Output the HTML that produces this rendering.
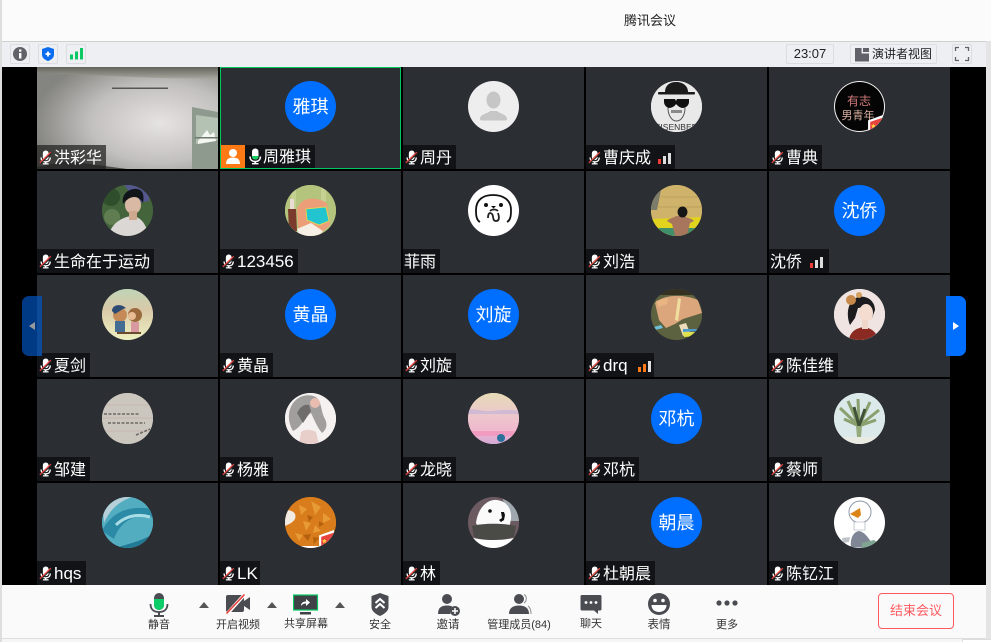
<!DOCTYPE html>
<html lang="zh">
<head>
<meta charset="utf-8">
<title>腾讯会议</title>
<style>
html,body{margin:0;padding:0;width:991px;height:642px;overflow:hidden;background:#fff;font-family:"Liberation Sans","Noto Sans CJK SC",sans-serif}
div,span,svg{box-sizing:border-box}
.abs,.c,.l,.av,.t,.box,.tri{position:absolute}
.c{width:181px;height:102px;background:#2b2e33}
.l{left:0;top:78px;height:24px;background:#111316;color:#fff;font-size:16px;line-height:27px;padding-left:17px;white-space:nowrap;overflow:hidden}
.lat{font-size:17px;line-height:26px;padding-left:17px}
.l svg.m{position:absolute;left:2px;top:5px;width:13px;height:15px}
.l svg.sig{position:absolute;top:8px;width:14px;height:11px}
.av{left:65px;top:14px;width:51px;height:51px;border-radius:50%;overflow:hidden;text-align:center;color:#fff;font-size:18px;line-height:53px}
.av svg{display:block;width:51px;height:51px}
.blue{background:#006fff}
.t{font-size:11px;line-height:14px;color:#333;text-align:center;width:80px;white-space:nowrap}
.box{top:44px;height:20px;border:1px solid #dcdde1;background:#eeeff3;border-radius:2px}
.tri{width:0;height:0;border-left:5px solid transparent;border-right:5px solid transparent;border-bottom:6px solid #555;top:602px}
</style>
</head>
<body>
<svg width="0" height="0" style="position:absolute">
<defs>
<symbol id="m" viewBox="0 0 14 17">
<rect x="4" y="0.5" width="6.500" height="11" rx="3.200" fill="#fff"/>
<path d="M2 8.500c0 3.400 2.200 5 5.200 5s5.200-1.600 5.200-5" fill="none" stroke="#fff" stroke-width="1.500"/>
<rect x="6.400" y="13" width="1.600" height="2.500" fill="#fff"/>
<rect x="4" y="15" width="6.500" height="1.400" fill="#fff"/>
<path d="M0.800 14.500L13.200 2.500" stroke="#222" stroke-width="1.200" transform="translate(.8 .8)"/>
<path d="M0.500 14.500L13 2.500" stroke="#e8413c" stroke-width="1.300"/>
</symbol>
<symbol id="sr" viewBox="0 0 14 11"><rect x="1" y="6" width="3" height="5" fill="#f23c36"/><rect x="6" y="3" width="3" height="8" fill="#ddd"/><rect x="11" y="0" width="3" height="11" fill="#ddd"/></symbol>
<symbol id="so" viewBox="0 0 14 11"><rect x="1" y="6" width="3" height="5" fill="#ff7a14"/><rect x="6" y="3" width="3" height="8" fill="#ff7a14"/><rect x="11" y="0" width="3" height="11" fill="#ddd"/></symbol>
<symbol id="flag" viewBox="0 0 16 16"><path d="M1 5L15 0V16H1Z" fill="#fff"/><path d="M3 6.500L15 2.500V16H3Z" fill="#e8423f"/><path d="M6 8l.7 1.500 1.600.2-1.200 1 .4 1.600-1.500-.8-1.400.8.300-1.600-1.100-1 1.600-.2z" fill="#ffd23c"/></symbol>
</defs>
</svg>

<!-- chrome -->
<div class="abs" style="left:0;top:0;width:991px;height:42px;background:#fbfbfb"></div>
<div class="abs" style="left:0;top:0;width:2px;height:642px;background:#dedede"></div>
<div class="abs" style="left:624px;top:12px;font-size:13px;line-height:18px;color:#222;white-space:nowrap">腾讯会议</div>
<div class="abs" style="left:2px;top:41px;width:984px;height:26px;background:#eeeff3;border-top:1px solid #cfcfcf"></div>
<div class="abs" style="left:986px;top:41px;width:5px;height:598px;background:#e4e4e4"></div>
<div class="abs" style="left:2px;top:67px;width:984px;height:518px;background:#000"></div>

<div class="box" style="left:10px;width:20px"><svg width="18" height="18" style="display:block"><circle cx="9" cy="9" r="7" fill="#5f6268"/><rect x="8" y="8" width="2.400" height="5.500" fill="#fff"/><rect x="8" y="4.500" width="2.400" height="2.200" fill="#fff"/></svg></div>
<div class="box" style="left:38px;width:20px"><svg width="18" height="18" style="display:block"><path d="M9 2l6 2v5.500c0 3.500-3 5.500-6 6.500-3-1-6-3-6-6.500V4z" fill="#0a6cf0"/><path d="M9 6.500v5M6.500 9h5" stroke="#fff" stroke-width="1.800"/></svg></div>
<div class="box" style="left:66px;width:20px"><svg width="18" height="18" style="display:block"><rect x="3" y="9.500" width="3" height="5" fill="#0cc864"/><rect x="8" y="6.500" width="3" height="8" fill="#0cc864"/><rect x="13" y="3" width="3" height="11.500" fill="#0cc864"/></svg></div>

<div class="box" style="left:786px;width:48px;height:20px;font-size:13px;line-height:18px;text-align:center;color:#222">23:07</div>
<div class="box" style="left:850px;width:87px;height:20px;font-size:12px;line-height:19px;color:#222;padding-left:21px;white-space:nowrap"><svg width="15" height="15" style="position:absolute;left:4px;top:2px"><path d="M0 1h6.500v5.500H14V14.500H0z" fill="#5f6268"/><rect x="8" y="1" width="6" height="4" fill="#5f6268"/></svg>演讲者视图</div>
<div class="box" style="left:952px;width:20px;height:20px"><svg width="18" height="18" style="display:block"><path d="M2.500 6V2.500H6M12 2.500h3.500V6M15.500 12v3.500H12M6 15.500H2.500V12" fill="none" stroke="#5f6268" stroke-width="1.300"/></svg></div>

<!-- ROW 1 -->
<div class="c" style="left:37px;top:67px;background:#a9a9a6;overflow:hidden">
<svg width="181" height="102" style="position:absolute;left:0;top:0">
<defs><radialGradient id="wall" cx="68%" cy="55%" r="70%"><stop offset="0" stop-color="#e6e3e3"/><stop offset=".55" stop-color="#c2c0be"/><stop offset="1" stop-color="#848480"/></radialGradient>
<linearGradient id="ceil" x1="0" y1="0" x2="0" y2="1"><stop offset="0" stop-color="#63635b"/><stop offset="1" stop-color="#a8a8a0"/></linearGradient></defs>
<rect width="181" height="102" fill="url(#wall)"/>
<path d="M0 0H181V12L120 11 0 6z" fill="url(#ceil)"/>
<rect x="75" y="20.500" width="56" height="1.500" fill="#55564f"/>
<path d="M155 40l26 5v57h-26z" fill="#8d9a8d"/>
<path d="M159 48l22 3v22l-22 4z" fill="#b4c2b4"/>
<path d="M161 74l9-11 3 5 4-3 2 9-18 3z" fill="#f3f6f1"/>
<rect x="158" y="70" width="23" height="1.500" fill="#6d7a6c"/>
<path d="M0 100l30-6 60 8H0z" fill="#4a4a48"/>
</svg>
<div class="l" style="width:69px;background:rgba(32,32,32,.72)"><svg class="m"><use href="#m"/></svg>洪彩华</div>
</div>

<div class="c" style="left:220px;top:67px;border:1px solid #00c85a">
<div class="av blue" style="left:64px;top:13px">雅琪</div>
<div class="l" style="left:0;top:77px;width:94px;height:23px;padding-left:42px;line-height:26px">
<div class="abs" style="left:0;top:0;width:24px;height:23px;background:#ff7a14"><svg width="24" height="23"><circle cx="12" cy="8" r="4" fill="#fff"/><path d="M5 19c0-5 3-6.500 7-6.500s7 1.500 7 6.500z" fill="#fff"/></svg></div>
<svg width="14" height="17" style="position:absolute;left:27px;top:3px"><rect x="4" y=".5" width="6.500" height="11" rx="3.200" fill="#fff"/><path d="M4 8h6.500v.500a3.200 3 0 0 1-6.500 0z" fill="#17d060"/><path d="M2 8.500c0 3.400 2.200 5 5.200 5s5.200-1.600 5.200-5" fill="none" stroke="#fff" stroke-width="1.500"/><rect x="6.400" y="13" width="1.600" height="2.500" fill="#fff"/><rect x="4" y="15" width="6.500" height="1.400" fill="#fff"/></svg>周雅琪</div>
</div>

<div class="c" style="left:403px;top:67px"><div class="av" style="background:#eee"><svg viewBox="0 0 51 51"><ellipse cx="25.500" cy="19" rx="7" ry="8.500" fill="#c6c6c6"/><path d="M12 38c0-5 8-5.500 10-8h7c2 2.500 10 3 10 8 0 1-.6 1.500-2 1.500H14c-1.400 0-2-.5-2-1.500z" fill="#c6c6c6"/></svg></div>
<div class="l" style="width:53px"><svg class="m"><use href="#m"/></svg>周丹</div></div>

<div class="c" style="left:586px;top:67px"><div class="av" style="background:#e9e9e9"><svg viewBox="0 0 51 51"><rect width="51" height="51" fill="#e9e9e9"/><path d="M14 11C14 5 18 1 25 1s12 4 12 10z" fill="#1b1b1b"/><rect x="7" y="11" width="37" height="2.500" rx="1" fill="#1b1b1b"/><path d="M13 18h11l1 2 1-2h12v3c0 3-3 6-6 6-3 0-5-2-7-4-1 2-4 4-7 4-2 0-5-3-5-6z" fill="#111"/><path d="M17 27c0 6 3 13 8.500 13S34 33 34 27" fill="none" stroke="#555" stroke-width="1"/><rect x="20" y="29" width="11" height="3" fill="#8a8a8a"/><text x="25.500" y="49" text-anchor="middle" font-size="8.500" fill="#333" font-family="Liberation Sans">HEISENBERG</text></svg></div>
<div class="l" style="width:89px"><svg class="m"><use href="#m"/></svg>曹庆成<svg class="sig" style="left:71px"><use href="#sr"/></svg></div></div>

<div class="c" style="left:769px;top:67px"><div class="av" style="background:#f2f2f2"><svg viewBox="0 0 51 51"><circle cx="25.500" cy="25.500" r="24.500" fill="#050505"/><text x="25" y="24" text-anchor="middle" font-size="12" fill="#d07a7a" font-family="Noto Sans CJK SC">有志</text><text x="24" y="38" text-anchor="middle" font-size="11" fill="#d9b0a0" font-family="Noto Sans CJK SC">男青年</text><use href="#flag" x="33" y="34" width="17" height="17"/></svg></div>
<div class="l" style="width:53px"><svg class="m"><use href="#m"/></svg>曹典</div></div>

<!-- ROW 2 -->
<div class="c" style="left:37px;top:171px"><div class="av" style="background:#3f5f38"><svg viewBox="0 0 51 51"><rect width="51" height="51" fill="#44643b"/><path d="M22 0h25v16l-10 2z" fill="#54588e"/><circle cx="9" cy="12" r="9" fill="#2f4f2c"/><circle cx="10" cy="32" r="8" fill="#5f7d50"/><path d="M7 51c1-11 12-19 23-20 10 1 14 9 17 20z" fill="#dad7d4"/><ellipse cx="31" cy="20" rx="8" ry="9" fill="#d9b9a4"/><rect x="27" y="26" width="8" height="9" fill="#cfa98e"/><path d="M21 19c-2-11 7-16 14-15 7 1 7 8 6 14-2-3-4-6-9-6-4 0-8 3-11 7z" fill="#11151a"/></svg></div>
<div class="l" style="width:117px"><svg class="m"><use href="#m"/></svg>生命在于运动</div></div>

<div class="c" style="left:220px;top:171px"><div class="av" style="background:#b3c37c"><svg viewBox="0 0 51 51"><rect width="51" height="51" fill="#b4c47d"/><path d="M6 0h5v51H6zM36 0h5v24h-5z" fill="#c4d192"/><path d="M12 24C16 12 30 11 42 18l3 22-12 11H14z" fill="#ec9e78"/><path d="M12 44l14-6 12 8-4 5H14z" fill="#f5efe6"/><path d="M21 24l20-2 3 14-10 4-12-5z" fill="#22c4d0" stroke="#e4e04a" stroke-width=".8"/><path d="M3 24h8l1 22H4z" fill="#7a3a2c"/><rect x="5" y="14" width="4" height="10" fill="#e8dcd4"/></svg></div>
<div class="l lat" style="width:78px"><svg class="m"><use href="#m"/></svg>123456</div></div>

<div class="c" style="left:403px;top:171px"><div class="av" style="background:#fff"><svg viewBox="0 0 51 51"><path d="M12 37c-4-2-4-8-4-12C8 14 16 10 25 10s18 4 18 15c0 4 0 10-4 12" fill="none" stroke="#111" stroke-width="1.800"/><circle cx="18" cy="20" r="2" fill="#111"/><circle cx="33" cy="20" r="2" fill="#111"/><path d="M22 26c2-2 6-2 8 0M20 33c0-5 2-6 4-4s0 7 4 7 3-5 2-8" fill="none" stroke="#222" stroke-width="1.800"/><path d="M23 21h5l-2.500 2.500z" fill="#111"/></svg></div>
<div class="l" style="width:37px;padding-left:1px">菲雨</div></div>

<div class="c" style="left:586px;top:171px"><div class="av" style="background:#cdb169"><svg viewBox="0 0 51 51"><rect width="51" height="51" fill="#cfb36b"/><path d="M0 0h11L6 25H0z" fill="#7c7c6a"/><path d="M10 12h41M6 22h45" stroke="#b39a55" stroke-width=".8"/><path d="M0 34l51-2v19H0z" fill="#e2d41e"/><path d="M8 43h36v8H8z" fill="#3f8f6a"/><path d="M16 36c2-3 7-3 9-5h8c2 2 8 2 10 5l-4 2-2 9-3 4H24l-3-12z" fill="#a8765c"/><ellipse cx="31.500" cy="27" rx="5" ry="5.500" fill="#161616"/></svg></div>
<div class="l" style="width:53px"><svg class="m"><use href="#m"/></svg>刘浩</div></div>

<div class="c" style="left:769px;top:171px"><div class="av blue">沈侨</div>
<div class="l" style="width:60px;padding-left:1px">沈侨<svg class="sig" style="left:40px"><use href="#sr"/></svg></div></div>

<!-- ROW 3 -->
<div class="c" style="left:37px;top:275px"><div class="av" style="background:#dcdcb8"><svg viewBox="0 0 51 51"><defs><linearGradient id="sea" x1="0" y1="0" x2="0" y2="1"><stop offset="0" stop-color="#bfd4b8"/><stop offset=".4" stop-color="#d9c9a8"/><stop offset="1" stop-color="#edf0c0"/></linearGradient></defs><rect width="51" height="51" fill="url(#sea)"/><circle cx="18" cy="26" r="7" fill="#c68a58"/><path d="M10 22c0-6 8-8 14-3l-3 1-8 5z" fill="#2b4b72"/><rect x="13" y="32" width="10" height="11" fill="#456d93"/><circle cx="33" cy="26" r="7" fill="#9a6a3d"/><circle cx="30" cy="27" r="4" fill="#e8bc94"/><rect x="29" y="33" width="8" height="11" fill="#d89aa0"/><rect x="15" y="43" width="24" height="2" fill="#6b4b30"/></svg></div>
<div class="l" style="width:53px"><svg class="m"><use href="#m"/></svg>夏剑</div></div>

<div class="c" style="left:220px;top:275px"><div class="av blue">黄晶</div>
<div class="l" style="width:53px"><svg class="m"><use href="#m"/></svg>黄晶</div></div>

<div class="c" style="left:403px;top:275px"><div class="av blue">刘旋</div>
<div class="l" style="width:53px"><svg class="m"><use href="#m"/></svg>刘旋</div></div>

<div class="c" style="left:586px;top:275px"><div class="av" style="background:#5a5f3a"><svg viewBox="0 0 51 51"><rect width="51" height="51" fill="#5c6140"/><rect width="51" height="6" fill="#35301f"/><path d="M4 14c8-9 30-9 43-3l4 13-19 6-8 5-9 4-7-8z" fill="#dba67c"/><path d="M5 12l3 6 8-3 1-6z" fill="#e8b583"/><path d="M27 9l3 1-3 22-3-1z" fill="#f3e8a6" opacity=".85"/><path d="M28 36l7-2 4 10-7 3z" fill="#eadcb8"/><path d="M32 40h14l1 2-15 1z" fill="#4d9ad0"/><path d="M32 43h15l-1 4-13 1z" fill="#e0e04c"/><path d="M3 38l7-2 2 3-8 2z" fill="#6ec0d8"/></svg></div>
<div class="l lat" style="width:68px"><svg class="m"><use href="#m"/></svg>drq<svg class="sig" style="left:51px"><use href="#so"/></svg></div></div>

<div class="c" style="left:769px;top:275px"><div class="av" style="background:#efe3e0"><svg viewBox="0 0 51 51"><rect width="51" height="51" fill="#efe4e1"/><path d="M16 36c-4-10-3-24 8-28 9-2 17 4 17 13l-3 8-4-11-10 1-3 10z" fill="#1c1b1d"/><ellipse cx="32" cy="24" rx="7" ry="9" fill="#f4dcd0"/><circle cx="17" cy="11" r="5" fill="#c88a4a"/><circle cx="25" cy="6" r="3" fill="#d2a05a"/><path d="M15 51c1-9 8-12 15-13 7 1 13 5 14 13z" fill="#8b2a22"/><rect x="28" y="31" width="6" height="9" fill="#f0d6c8"/></svg></div>
<div class="l" style="width:69px"><svg class="m"><use href="#m"/></svg>陈佳维</div></div>

<!-- ROW 4 -->
<div class="c" style="left:37px;top:379px"><div class="av" style="background:#cac6be"><svg viewBox="0 0 51 51"><rect width="51" height="51" fill="#cbc7bf"/><path d="M0 12h51M0 25h51M0 38h51" stroke="#c9a8a0" stroke-width=".6"/><path d="M2 21h36M6 30h37M34 42l14-6" stroke="#6b6860" stroke-width="1.600" stroke-dasharray="3 1.500"/></svg></div>
<div class="l" style="width:53px"><svg class="m"><use href="#m"/></svg>邹建</div></div>

<div class="c" style="left:220px;top:379px"><div class="av" style="background:#f4f0f0"><svg viewBox="0 0 51 51"><rect width="51" height="51" fill="#f5f1f1"/><path d="M8 38c-6-10-6-24 4-32 8-6 18-4 21 0 4 6 3 13 7 20 3 6 1 11-3 14-5-6-8-14-11-20-4 2-6 6-9 10-2 3-5 6-9 8z" fill="#a19e9e"/><path d="M12 20c3-6 7-9 12-8l2 6-8 12z" fill="#6f6c6c"/><path d="M16 39c4-3 10-3 15 0l3 12H14z" fill="#e9cfca"/><circle cx="30" cy="10" r="5" fill="#e8bdb0"/></svg></div>
<div class="l" style="width:53px"><svg class="m"><use href="#m"/></svg>杨雅</div></div>

<div class="c" style="left:403px;top:379px"><div class="av" style="background:#edcdcf"><svg viewBox="0 0 51 51"><defs><linearGradient id="sky" x1="0" y1="0" x2="0" y2="1"><stop offset="0" stop-color="#e5dbb4"/><stop offset=".4" stop-color="#ecc9cc"/><stop offset=".75" stop-color="#f0b8ce"/><stop offset="1" stop-color="#d4a8d8"/></linearGradient></defs><rect width="51" height="51" fill="url(#sky)"/><path d="M0 16c10 0 16 3 24 2s16-2 27 0v3H0z" fill="#c9b5d6" opacity=".8"/><rect y="38" width="51" height="5" fill="#f490bb" opacity=".7"/><circle cx="33" cy="45" r="4" fill="#2b6f9a"/></svg></div>
<div class="l" style="width:53px"><svg class="m"><use href="#m"/></svg>龙晓</div></div>

<div class="c" style="left:586px;top:379px"><div class="av blue">邓杭</div>
<div class="l" style="width:53px"><svg class="m"><use href="#m"/></svg>邓杭</div></div>

<div class="c" style="left:769px;top:379px"><div class="av" style="background:#dbe9ea"><svg viewBox="0 0 51 51"><rect width="51" height="51" fill="#dbe9ea"/><rect y="44" width="51" height="7" fill="#e9eae2"/><path d="M25 33L6 15M25 33L14 8M25 33L24 6M25 33L36 9M25 33L45 17M25 33L10 26M25 33L42 27" stroke="#8aa06e" stroke-width="3"/><path d="M25 33L20 14M25 33L31 16" stroke="#3f5238" stroke-width="3"/><path d="M22 33h6l-1 11h-4z" fill="#96ab7c"/></svg></div>
<div class="l" style="width:53px"><svg class="m"><use href="#m"/></svg>蔡师</div></div>

<!-- ROW 5 -->
<div class="c" style="left:37px;top:483px"><div class="av" style="background:#4ba5bb"><svg viewBox="0 0 51 51"><rect width="51" height="51" fill="#53adc0"/><path d="M0 0h30C18 4 8 12 2 26z" fill="#b6cfd8"/><path d="M0 34C10 14 28 8 51 12v8C34 16 18 24 12 42z" fill="#2b8aa5"/><path d="M14 28c8-8 20-12 34-8" fill="none" stroke="#a8dde6" stroke-width="3"/><path d="M14 51c10-4 24-6 37-14v14z" fill="#237a96"/></svg></div>
<div class="l lat" style="width:49px"><svg class="m"><use href="#m"/></svg>hqs</div></div>

<div class="c" style="left:220px;top:483px"><div class="av" style="background:#d6791a"><svg viewBox="0 0 51 51"><rect width="51" height="51" fill="#d87c1c"/><path d="M0 12c4 2 8 1 10 5 2 6-3 9-10 12z" fill="#f2ebe3"/><path d="M14 8l8 4-6 6zM26 4l10 6-6 8zM38 16l8 6-8 4zM18 24l8 2-5 8zM30 28l6 6-8 2zM10 36l8 2-4 6z" fill="#e89a34"/><path d="M22 18l6 2-4 5zM34 24l5 3-5 3zM18 38l8-1-3 7zM28 40l6 1-5 6z" fill="#b4600e"/><rect y="49" width="51" height="2" fill="#fff"/><use href="#flag" x="33" y="33" width="17" height="17"/></svg></div>
<div class="l lat" style="width:40px"><svg class="m"><use href="#m"/></svg>LK</div></div>

<div class="c" style="left:403px;top:483px"><div class="av" style="background:#6e5b62"><svg viewBox="0 0 51 51"><rect width="51" height="51" fill="#6b5a60"/><path d="M34 0h17v24H42z" fill="#9fa8ae"/><path d="M8 26C10 10 20 2 29 3c9 1 15 8 14 19l-2 10-30 0z" fill="#fafafa"/><path d="M4 29c10-3 32-3 44 0l-2 11-13 3H14L6 40z" fill="#4a4a46"/><path d="M3 40c10 4 35 4 46 0l-3 11H8z" fill="#fff"/><circle cx="22" cy="14" r="1.800" fill="#111"/><path d="M33 15h3l1 3-1 5-3 2-2-2 3-2z" fill="#111"/></svg></div>
<div class="l" style="width:37px"><svg class="m"><use href="#m"/></svg>林</div></div>

<div class="c" style="left:586px;top:483px"><div class="av blue">朝晨</div>
<div class="l" style="width:69px"><svg class="m"><use href="#m"/></svg>杜朝晨</div></div>

<div class="c" style="left:769px;top:483px"><div class="av" style="background:#fff"><svg viewBox="0 0 51 51"><ellipse cx="26" cy="15" rx="11" ry="11" fill="#fff" stroke="#8f98a8"/><path d="M16 17l10-6 1 7-3 3z" fill="#dc8418"/><path d="M20 25h11v8H20z" fill="#fff" stroke="#a0a6b2" stroke-width=".6"/><path d="M17 50c-1-8 2-15 8-16 6 1 10 8 13 12l-3 5z" fill="#7f8797"/><path d="M28 46l12-3 4 3-6 5H28z" fill="#7fa491"/><path d="M8 41l8-1-1 5-6 1z" fill="#bfc4cb"/></svg></div>
<div class="l" style="width:69px"><svg class="m"><use href="#m"/></svg>陈钇江</div></div>

<!-- side handles -->
<div class="abs" style="left:22px;top:296px;width:15px;height:60px;background:#003a85;border-radius:7px 0 0 7px"></div>
<div class="abs" style="left:37px;top:296px;width:5px;height:60px;background:#0d4a9a"></div>
<div class="abs" style="left:29px;top:322px;width:0;height:0;border-top:4.500px solid transparent;border-bottom:4.500px solid transparent;border-right:6px solid #9a9a9a"></div>
<div class="abs" style="left:946px;top:296px;width:20px;height:60px;background:#006fff;border-radius:0 7px 7px 0"></div>
<div class="abs" style="left:953px;top:322px;width:0;height:0;border-top:4.500px solid transparent;border-bottom:4.500px solid transparent;border-left:6px solid #fff"></div>

<!-- bottom bar -->
<div class="abs" style="left:2px;top:585px;width:984px;height:54px;background:#fafafa;border-bottom:1px solid #dedede"></div>
<div class="abs" style="left:2px;top:639px;width:989px;height:3px;background:#f6f6f6"></div>
<div class="abs" style="left:962px;top:639px;width:29px;height:3px;background:#fff;border-left:1px solid #ddd;border-top:1px solid #ddd"></div>

<!-- mic -->
<svg class="abs" style="left:148px;top:592px" width="22" height="26"><rect x="6" y="1" width="10" height="17" rx="5" fill="#4a4c52"/><path d="M6 7h10v6a5 5 0 0 1-10 0z" fill="#0ccd68"/><path d="M2.500 12c0 5.500 3.500 8 8.500 8s8.500-2.500 8.500-8" fill="none" stroke="#4a4c52" stroke-width="1.800"/><rect x="10" y="20" width="2" height="3" fill="#4a4c52"/><rect x="6" y="23" width="10" height="2" fill="#4a4c52"/></svg>
<div class="t" style="left:119px;top:618px;font-size:11px;color:#333">静音</div>
<div class="tri" style="left:199px"></div>

<!-- video -->
<svg class="abs" style="left:225px;top:594px" width="26" height="20"><rect x="1" y="1" width="18" height="17" rx="2" fill="#4a4c52"/><path d="M19 7l6-4v13l-6-4z" fill="#4a4c52"/><path d="M2 20L20 0" stroke="#fff" stroke-width="3.500"/><path d="M1.500 19.500L19.500 .5" stroke="#e8413c" stroke-width="1.600"/></svg>
<div class="t" style="left:198px;top:618px;color:#333">开启视频</div>
<div class="tri" style="left:267px"></div>

<!-- share -->
<svg class="abs" style="left:293px;top:594px" width="26" height="22"><rect x="0.500" y="1" width="24" height="15" fill="#3f4146" stroke="#0cc864" stroke-width="1.200"/><path d="M8 12c0-3 2-4.500 5-4.500V5l4 3.500-4 3.500V9.500c-2 0-3.500 .5-5 2.500z" fill="#fff"/><rect x="7" y="18" width="11" height="2.500" fill="#3f4146"/></svg>
<div class="t" style="left:266px;top:617px;color:#333">共享屏幕</div>
<div class="tri" style="left:335px"></div>

<!-- security -->
<svg class="abs" style="left:370px;top:592px" width="20" height="25"><path d="M10 1l8.500 3v11c0 4-4 7-8.500 9-4.500-2-8.500-5-8.500-9V4z" fill="#4a4c52"/><path d="M5.500 11L10 7l4.500 4M5.500 16L10 12l4.500 4" fill="none" stroke="#fff" stroke-width="2"/></svg>
<div class="t" style="left:340px;top:618px;color:#333">安全</div>

<!-- invite -->
<svg class="abs" style="left:437px;top:593px" width="24" height="24"><circle cx="10" cy="6" r="5" fill="#4a4c52"/><path d="M1 21c0-6 3-8.500 9-8.500 3 0 5 .5 6.500 2-3 1.500-4 4-3 6.500z" fill="#4a4c52"/><circle cx="18" cy="18" r="5" fill="#4a4c52"/><path d="M18 15v6M15 18h6" stroke="#fff" stroke-width="1.500"/></svg>
<div class="t" style="left:408px;top:618px;font-size:11.500px;color:#333">邀请</div>

<!-- participants -->
<svg class="abs" style="left:508px;top:593px" width="24" height="24"><circle cx="11" cy="6" r="5" fill="#4a4c52"/><path d="M1 21c0-6 4-8.500 10-8.500s10 2.500 10 8.500z" fill="#4a4c52"/><path d="M16 1.500c3 1 3 7 0 8.500M20 13c2 1.500 3 4 3 8" fill="none" stroke="#8a8c90" stroke-width="1"/></svg>
<div class="t" style="left:469px;top:618px;width:100px;color:#333">管理成员(84)</div>

<!-- chat -->
<svg class="abs" style="left:580px;top:594px" width="22" height="21"><path d="M2 1h18a1.500 1.500 0 0 1 1.500 1.500V15a1.500 1.500 0 0 1-1.500 1.500h-2V20l-4-3.500H2A1.500 1.500 0 0 1 .5 15V2.500A1.500 1.500 0 0 1 2 1z" fill="#4a4c52"/><circle cx="6" cy="8.500" r="1.400" fill="#fff"/><circle cx="11" cy="8.500" r="1.400" fill="#fff"/><circle cx="16" cy="8.500" r="1.400" fill="#fff"/></svg>
<div class="t" style="left:551px;top:617px;color:#333">聊天</div>

<!-- reactions -->
<svg class="abs" style="left:647px;top:592px" width="24" height="24"><circle cx="12" cy="12" r="11" fill="#4a4c52"/><circle cx="8" cy="8.500" r="1.800" fill="#fff"/><circle cx="16" cy="8.500" r="1.800" fill="#fff"/><path d="M4.500 13h15c0 4.500-3.500 7-7.500 7s-7.500-2.500-7.500-7z" fill="#fff"/></svg>
<div class="t" style="left:619px;top:618px;font-size:11.500px;color:#333">表情</div>

<!-- more -->
<svg class="abs" style="left:715px;top:598px" width="24" height="10"><circle cx="4" cy="5" r="2.600" fill="#4a4c52"/><circle cx="12" cy="5" r="2.600" fill="#4a4c52"/><circle cx="20" cy="5" r="2.600" fill="#4a4c52"/></svg>
<div class="t" style="left:687px;top:618px;color:#333">更多</div>

<div class="abs" style="left:878px;top:593px;width:76px;height:36px;border:1px solid #ff5a5f;border-radius:4px;color:#ff5a5f;font-size:13px;line-height:34px;text-align:center">结束会议</div>
</body>
</html>
